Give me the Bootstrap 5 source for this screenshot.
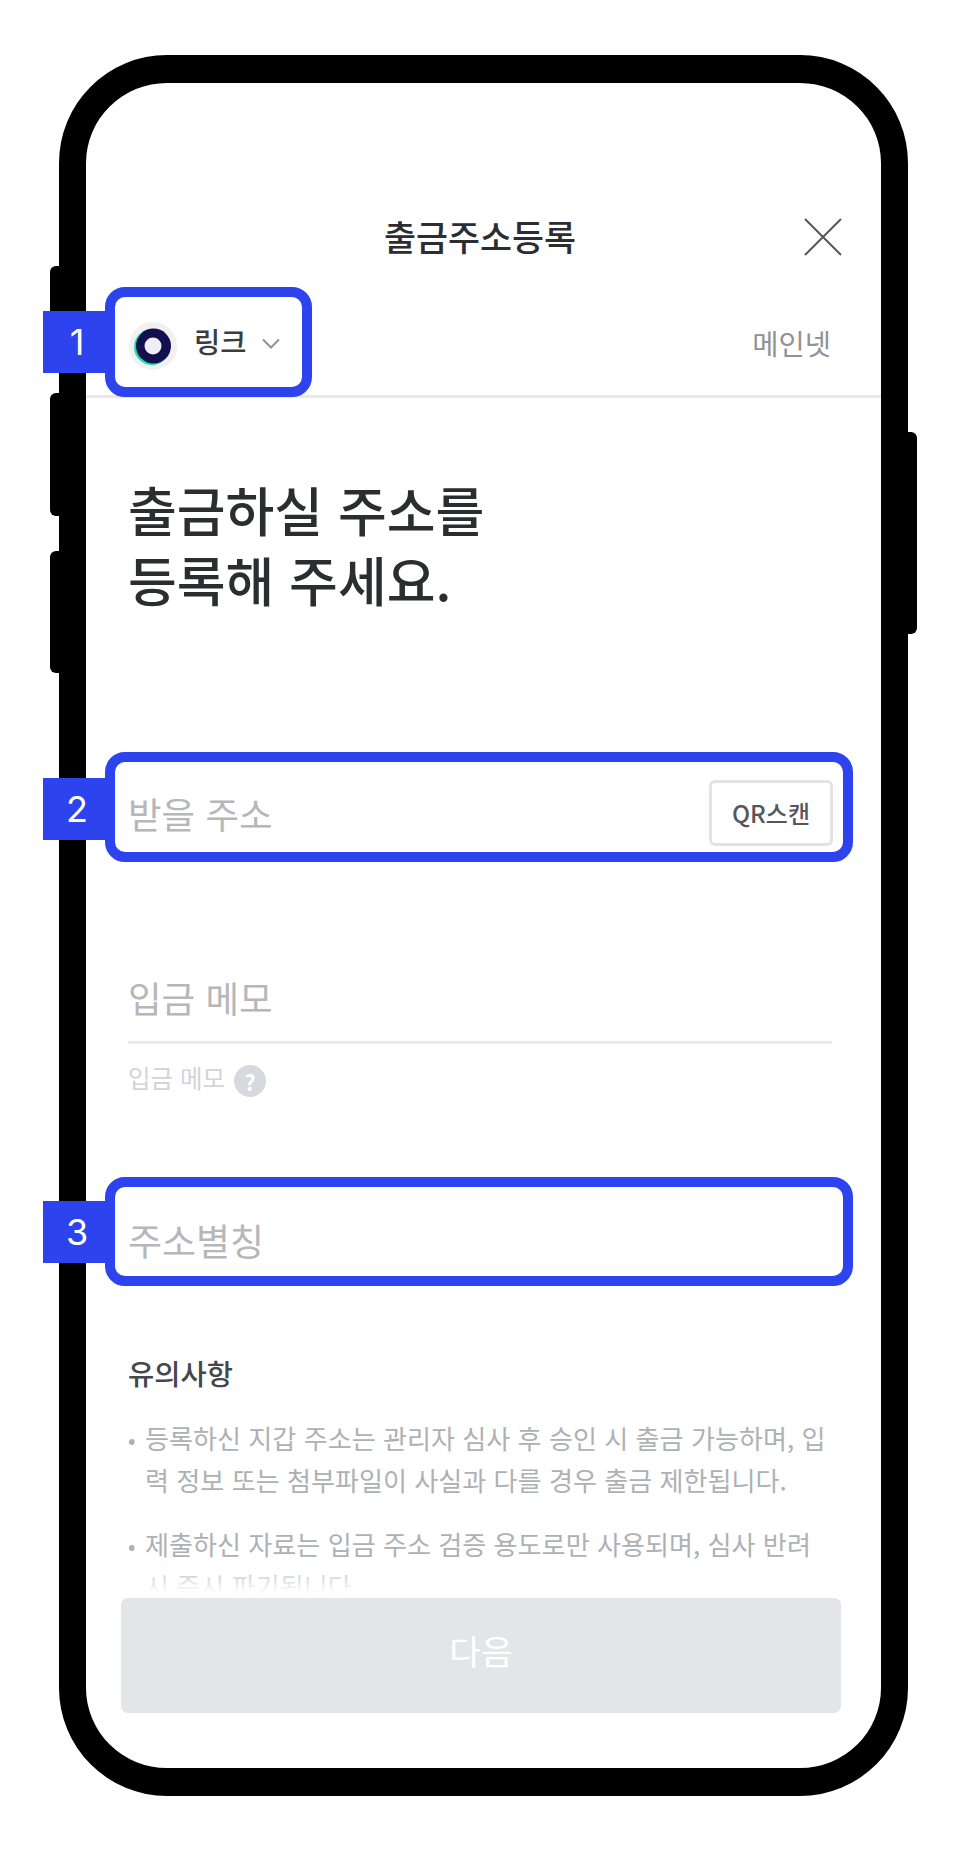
<!DOCTYPE html>
<html lang="ko">
<head>
<meta charset="utf-8">
<title>출금주소등록</title>
<link rel="stylesheet" href="https://cdn.jsdelivr.net/npm/bootstrap@5.3.0/dist/css/bootstrap.min.css">
<style>
body { background:#fff; font-family:"Noto Sans CJK KR","Noto Sans",sans-serif; color:#2b2d30; margin:0; }
.stage { padding:55px 0 0 59px; }
.phone { position:relative; width:849px; height:1741px; border:solid #000; border-width:28px 27px; border-radius:108px; background:#fff; }
.side-key { position:absolute; width:12px; background:#000; }
.side-l { left:-36px; border-radius:6px 0 0 6px; }
.side-r { right:-36px; border-radius:0 6px 6px 0; }
.key-a { top:183px; height:90px; }
.key-b { top:310px; height:123px; }
.key-c { top:468px; height:122px; }
.key-d { top:349px; height:202px; }
.screen { height:100%; }
.top-title { padding:123px 39px 0 298px; height:184px; }
.title-text { font-size:34.8px; font-weight:500; line-height:60px; color:#2b2d30; }
.close-x { width:38px; height:38px; margin-top:12px; }
.net-row { height:131px; padding:19px 50px 0 19px; border-bottom:3px solid #e8e9eb; }
.mark-box { position:relative; border:10px solid #2c43ed; border-radius:20px; background:#fff; }
.mark-box.net { width:207px; height:110px; margin-bottom:-2px; padding-left:14px; }
.mark-num { position:absolute; left:-72px; top:50%; width:62px; height:62px; margin-top:-31px; padding-left:6px; background:#2c43ed; color:#fff; font-family:Inter,sans-serif; font-size:36px; line-height:62px; text-align:center; }
.mark-num.low { margin-top:-29px; }
.net-logo { width:48px; height:48px; margin-top:8px; flex:none; }
.net-name { font-size:28.5px; font-weight:500; color:#3a3c40; margin-left:17px; }
.net-chev { width:18px; height:11px; margin-left:16px; margin-top:4px; }
.net-side { font-size:28.5px; color:#8f9297; margin-top:5px; }
.lead-text { margin:76px 0 138px 42px; font-size:53px; font-weight:500; line-height:70px; color:#2b2d30; }
.mark-box.field { width:748px; margin-left:19px; padding:0 10px 0 13px; }
.mark-box.h110 { height:110px; }
.mark-box.h109 { height:109px; }
.ph-text { font-size:36.5px; line-height:50px; color:#b5b7ba; }
.ph-text.addr { margin-top:27px; }
.qr-btn { width:124px; height:66px; margin-top:18px; padding:0; background:#fff; border:3px solid #e2e3e5; border-radius:6px; font-size:24px; font-weight:500; color:#55575b; }
.memo { margin:112px 49px 0 42px; padding:0 0 17px; border-bottom:3px solid #e9eaec; }
.memo-text { margin-top:-1px; padding-bottom:1px; }
.memo-help { margin:21px 0 80px 42px; height:32px; font-size:24.5px; color:#d2d4d6; line-height:28px; }
.memo-help-label { margin-top:-6px; }
.help-dot { width:32px; height:32px; margin-left:9px; border-radius:50%; background:#d6d9dd; color:#fff; font-size:22px; font-weight:700; line-height:32px; text-align:center; flex:none; }
.ph-text.alias { padding-top:28px; display:block; font-size:37px; }
.notes { flex:1 1 0; min-height:0; overflow:hidden; position:relative; padding:69px 0 0 42px; }
.notes::after { content:""; position:absolute; left:0; right:0; bottom:0; height:26px; background:linear-gradient(rgba(255,255,255,.35),#fff 80%); }
.notes-head { font-size:28.5px; font-weight:500; line-height:36px; color:#45474b; margin-bottom:26px; }
.note-item { font-size:26.1px; line-height:42px; color:#aeb1b4; margin-bottom:22px; white-space:nowrap; }
.note-dot { width:17px; flex:none; font-size:22px; }
.next-btn, .next-btn:disabled { display:block; width:720px; height:115px; margin:0 0 55px 35px; padding:0 0 9px; background:#e4e5e7; border:0; border-radius:7px; color:#fff; font-size:34.5px; opacity:1; }
</style>
</head>
<body>
<div class="stage">
  <div class="phone">
    <span class="side-key side-l key-a"></span>
    <span class="side-key side-l key-b"></span>
    <span class="side-key side-l key-c"></span>
    <span class="side-key side-r key-d"></span>
    <div class="screen d-flex flex-column">
      <div class="top-title d-flex justify-content-between align-items-start">
        <div class="title-text">출금주소등록</div>
        <svg class="close-x" viewBox="0 0 38 38" aria-label="닫기"><path d="M1 1 37 37M37 1 1 37" stroke="#55575b" stroke-width="2" fill="none"/></svg>
      </div>
      <div class="net-row d-flex justify-content-between align-items-center">
        <div class="mark-box net d-flex align-items-center">
          <span class="mark-num">1</span>
          <svg class="net-logo" viewBox="0 0 48 48">
            <circle cx="24" cy="24" r="24" fill="#f3f1f0"/>
            <circle cx="23" cy="25" r="18" fill="#1de0a8"/>
            <circle cx="24.5" cy="24" r="17.5" fill="#12104f"/>
            <circle cx="24" cy="24" r="8.5" fill="#f0eef4"/>
          </svg>
          <span class="net-name">링크</span>
          <svg class="net-chev" viewBox="0 0 18 11"><path d="M1 1.5 9 9.5 17 1.5" fill="none" stroke="#8f9297" stroke-width="2"/></svg>
        </div>
        <div class="net-side">메인넷</div>
      </div>
      <div class="lead-text">출금하실 주소를<br>등록해 주세요.</div>
      <div class="mark-box field h110 d-flex justify-content-between align-items-start">
        <span class="mark-num low">2</span>
        <span class="ph-text addr">받을 주소</span>
        <button type="button" class="btn qr-btn">QR스캔</button>
      </div>
      <div class="memo"><span class="ph-text memo-text d-block">입금 메모</span></div>
      <div class="memo-help d-flex align-items-center">
        <span class="memo-help-label">입금 메모</span><span class="help-dot">?</span>
      </div>
      <div class="mark-box field h109">
        <span class="mark-num">3</span>
        <span class="ph-text alias">주소별칭</span>
      </div>
      <div class="notes">
        <div class="notes-head">유의사항</div>
        <div class="note-item d-flex"><span class="note-dot">•</span><span>등록하신 지갑 주소는 관리자 심사 후 승인 시 출금 가능하며, 입<br>력 정보 또는 첨부파일이 사실과 다를 경우 출금 제한됩니다.</span></div>
        <div class="note-item d-flex"><span class="note-dot">•</span><span>제출하신 자료는 입금 주소 검증 용도로만 사용되며, 심사 반려<br>시 즉시 파기됩니다.</span></div>
      </div>
      <button type="button" class="btn next-btn" disabled>다음</button>
    </div>
  </div>
</div>
<script src="https://cdn.jsdelivr.net/npm/bootstrap@5.3.0/dist/js/bootstrap.bundle.min.js"></script>
</body>
</html>
